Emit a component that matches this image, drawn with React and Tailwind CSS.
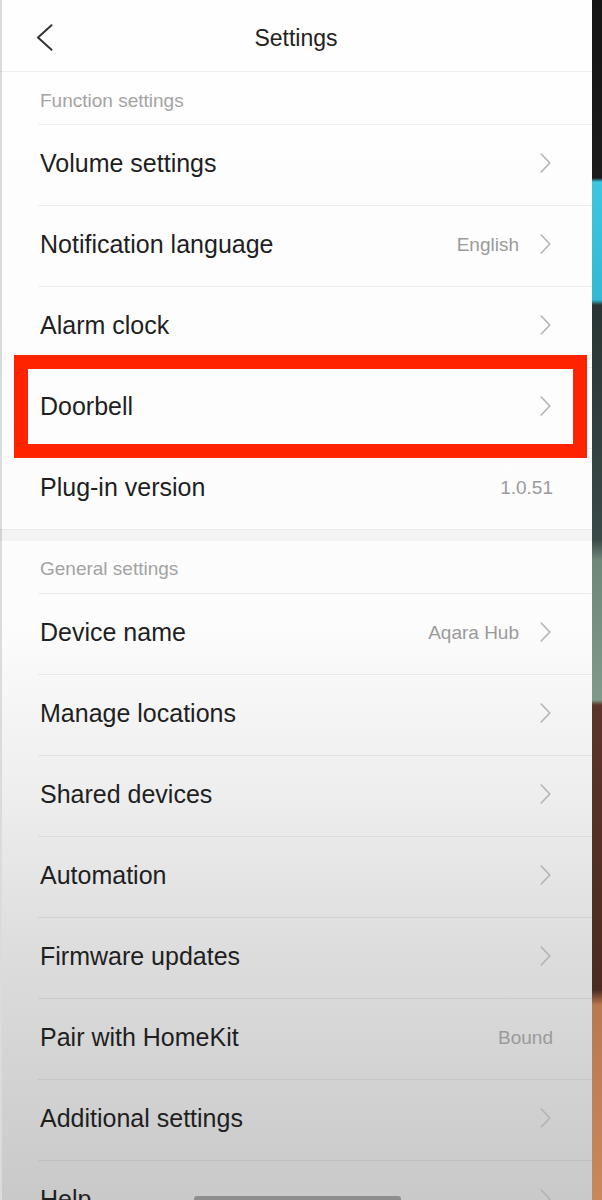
import React from "react";

const Chevron = () => (
  <svg width="11" height="20" viewBox="0 0 11 20" fill="none" className="shrink-0">
    <path d="M1.2 1 L9.8 10 L1.2 19" stroke="#b3b3b3" strokeWidth="1.6" strokeLinecap="round" strokeLinejoin="round" />
  </svg>
);

const Row = ({ label, value, chevron = true }) => (
  <div className="ml-[38px] h-[81px] border-t border-black/[0.06] flex items-center justify-between pl-[2px] pr-[41px] pb-[4px]">
    <span className="text-[25px] text-[#1f1f1f] leading-none">{label}</span>
    <div className="flex items-center">
      {value && (
        <span className={`text-[19px] text-[#9a9a9a] leading-none ${chevron ? "mr-[21px]" : "-mr-[2px]"}`}>{value}</span>
      )}
      {chevron && <Chevron />}
    </div>
  </div>
);

const SectionHeader = ({ title, shift }) => (
  <div className={`h-[52px] flex items-center pl-[40px] ${shift}`}>
    <span className="text-[19px] text-[#a3a3a3] leading-none">{title}</span>
  </div>
);

export default function App() {
  return (
    <div
      className="relative w-[602px] h-[1200px] overflow-hidden flex"
      style={{ fontFamily: '"Liberation Sans", Arial, sans-serif' }}
    >
      <div className="relative w-[592px] h-full bg-[linear-gradient(to_bottom,#fefefe_0%,#fcfcfc_52%,#eeeeee_66%,#dcdcdc_80%,#c9c9c9_100%)] border-l-2 border-[#d9dcdc]">
        {/* Header */}
        <div className="h-[72px] -ml-[2px] border-b border-black/[0.06] flex items-center justify-center relative pt-[5px]">
          <svg width="17" height="27" viewBox="0 0 17 27" fill="none" className="absolute left-[36px] top-[24px]">
            <path d="M15.5 1.2 L2 13.5 L15.5 25.8" stroke="#333333" strokeWidth="2" strokeLinecap="round" strokeLinejoin="round" />
          </svg>
          <span className="text-[23px] text-[#222222] leading-none">Settings</span>
        </div>

        <div className="-ml-[2px]">
          <SectionHeader title="Function settings" shift="pt-[4px]" />
          <Row label="Volume settings" />
          <Row label="Notification language" value="English" />
          <Row label="Alarm clock" />
          <Row label="Doorbell" />
          <Row label="Plug-in version" value="1.0.51" chevron={false} />

          <div className="h-[12px] bg-black/[0.035] border-t border-black/[0.04]" />

          <SectionHeader title="General settings" shift="pt-[2px]" />
          <Row label="Device name" value="Aqara Hub" />
          <Row label="Manage locations" />
          <Row label="Shared devices" />
          <Row label="Automation" />
          <Row label="Firmware updates" />
          <Row label="Pair with HomeKit" value="Bound" chevron={false} />
          <Row label="Additional settings" />
          <Row label="Help" />
        </div>

        {/* Red highlight box */}
        <div className="absolute left-[12px] top-[355px] w-[573px] h-[103px] border-[14px] border-[#ff2400]" />

        {/* Home indicator */}
        <div className="absolute left-[192px] top-[1196px] w-[207px] h-[6px] rounded-full bg-[#8e8e8e]" />
      </div>

      {/* Background outside the phone screen */}
      <div className="w-[10px] h-full bg-[linear-gradient(to_bottom,#151515_0px,#1c1c1c_178px,#3ec6e0_182px,#34b8d4_300px,#2a3434_305px,#3a4a48_540px,#6e887a_560px,#7f9a8a_700px,#5a3626_705px,#4a2c20_990px,#b9794f_1005px,#c9875c_1200px)]" />
    </div>
  );
}
